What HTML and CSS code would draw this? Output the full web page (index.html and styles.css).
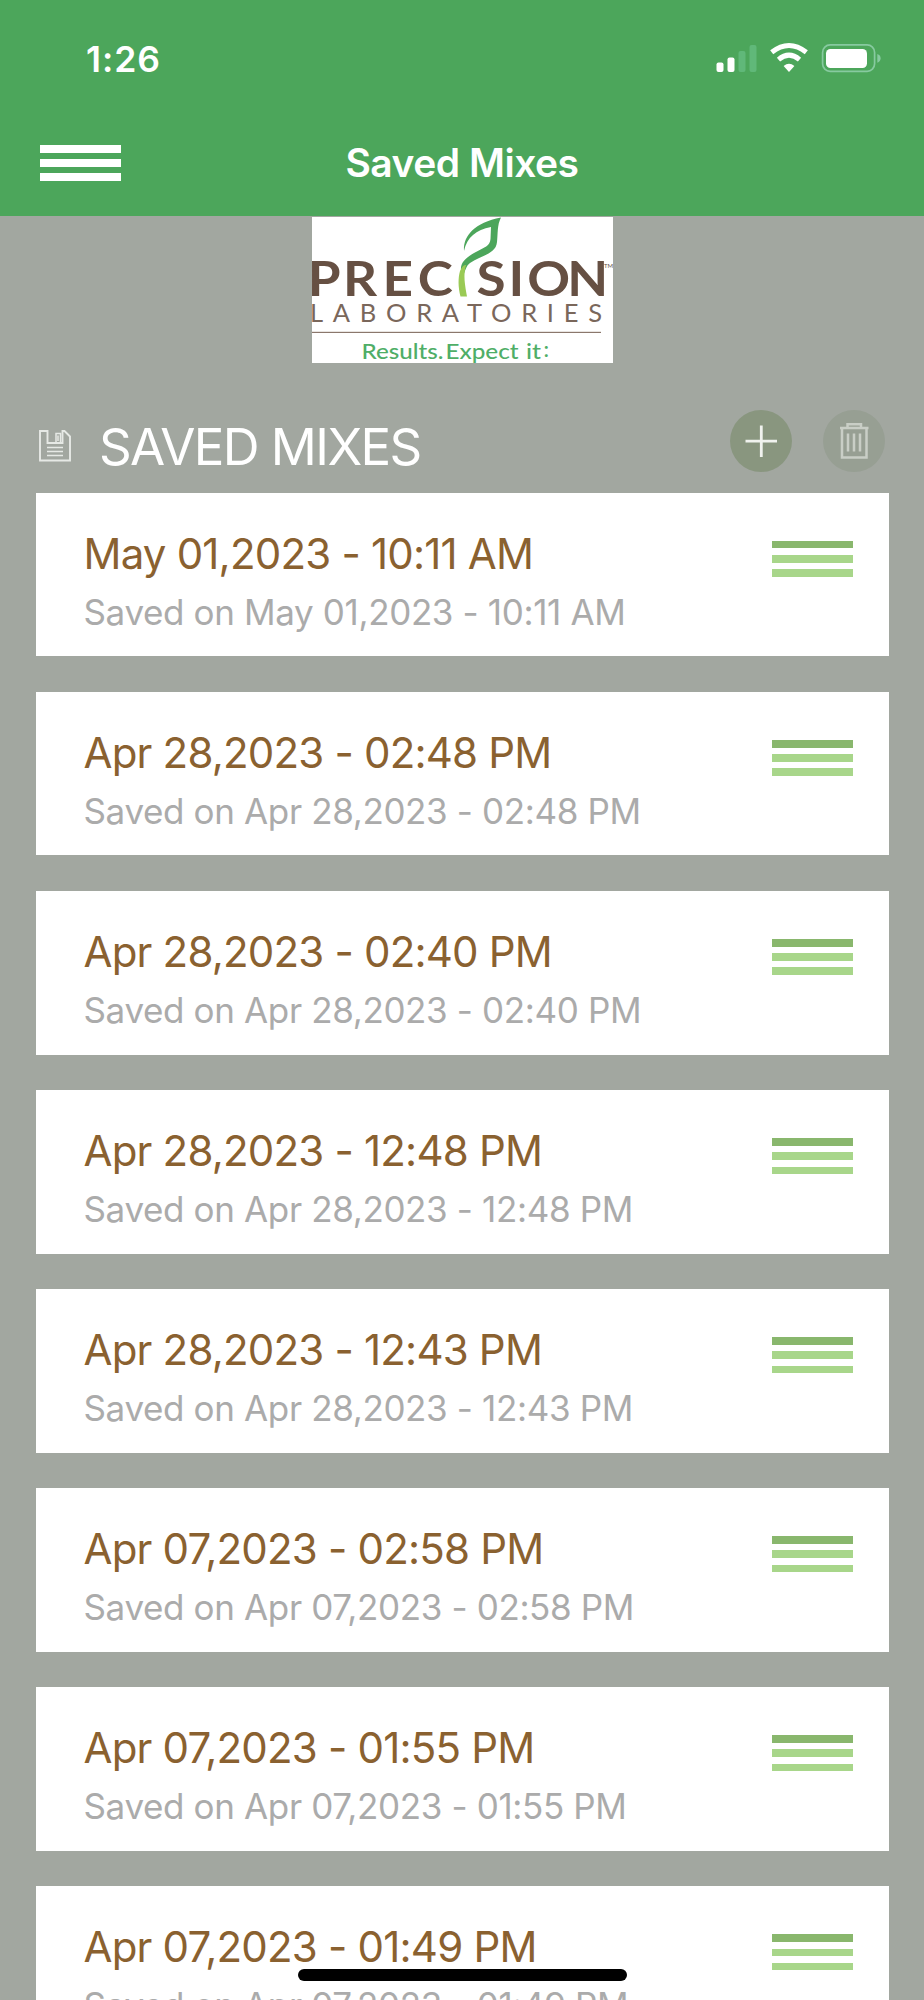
FILE: index.html
```html
<!DOCTYPE html>
<html lang="en">
<head>
  <meta charset="UTF-8" />
  <meta name="viewport" content="width=device-width, initial-scale=1.0"/>
  <title>Saved Mixes</title>
  <link rel="stylesheet" href="styles.css">
</head>
<body>

  <div class="header">
    <div class="status-bar">
      <div class="time">1:26</div>
      <svg class="status-icons" width="166" height="32" viewBox="0 0 166 32">
        <!-- signal -->
        <rect x="0.5" y="20.5" width="7" height="9.5" rx="2" fill="#fff"/>
        <rect x="11.5" y="15.5" width="7" height="14.5" rx="2" fill="#fff"/>
        <rect x="22.5" y="9" width="7" height="21" rx="2" fill="#60b879"/>
        <rect x="33.5" y="3" width="7" height="27" rx="2" fill="#60b879"/>
        <!-- wifi -->
        <path d="M55.7 10.2 Q73 -3.3 90.3 10.2" fill="none" stroke="#fff" stroke-width="5"/>
        <path d="M62.5 17.6 Q73 8.8 83.5 17.6" fill="none" stroke="#fff" stroke-width="5"/>
        <path d="M67.6 24 Q73 19.6 78.4 24 L73 30 Z" fill="#fff"/>
        <!-- battery -->
        <rect x="106.6" y="2.9" width="52" height="26.4" rx="7.5" fill="none" stroke="#87caa0" stroke-width="1.7"/>
        <rect x="110" y="7" width="41" height="19" rx="4.5" fill="#fff"/>
        <path d="M161.3 12 Q164.6 13 164.6 16.3 Q164.6 19.6 161.3 20.8 Z" fill="#87caa0"/>
      </svg>
    </div>
    <div class="nav-bar">
      <div class="bars menu-button"><span></span><span></span><span></span></div>
      <h1>Saved Mixes</h1>
    </div>
  </div>

  <div class="main-content">
    <svg class="logo" width="301" height="146" viewBox="0 0 301 146">
      <rect width="301" height="146" fill="#fff"/>
      <g class="logo-name" transform="scale(1.13 1)">
        <text x="-3.8 27.5 62.5 93.5" y="79.5">PREC</text>
        <text x="145.5 174 190.5 226" y="79.5">SION</text>
      </g>
      <text class="logo-tm" x="292" y="51">TM</text>
      <!-- leaf and stem -->
      <path d="M152 34 C151 20 161 6 189 0.5 C185 8 186 17 185 25 C184 37 170 38 158 46 C154 49 153 54 151 60 C146 49 150 43 162 36 C173 30 178 29 178.5 22 L179 10 C164 13 155 20 152 34 Z" fill="#4ca65b"/>
      <path d="M148 54 Q151 47 154 48 C151 58 153 68 155 79.5 L148.5 79.5 C146 70 146 61 148 54 Z" fill="#9aca55"/>
      <text class="logo-sub" x="-2" y="104.5" textLength="292" lengthAdjust="spacing">LABORATORIES</text>
      <rect x="0" y="114.8" width="289" height="1.2" fill="#8b776c"/>
      <text class="logo-tag" y="141.5"><tspan x="49.5" textLength="82" lengthAdjust="spacingAndGlyphs">Results.</tspan><tspan x="133.5" textLength="73" lengthAdjust="spacingAndGlyphs">Expect</tspan> <tspan x="214" textLength="15" lengthAdjust="spacingAndGlyphs">it</tspan><tspan x="231.5" dy="-1.5">:</tspan></text>
    </svg>

    <div class="section-header">
      <svg class="save-icon" width="32" height="32" viewBox="0 0 32 32" fill="none" stroke="#e6e9e5" stroke-width="1.9">
        <path d="M1 1 H8.5 V13 H23.5 V1 H25.5 L31 6.5 V30.5 H1 Z"/>
        <path d="M17 13 V3.5 H21.5 V13 M19 5.5 V11" stroke-width="1.5"/>
        <path d="M8 17.5 H24 M8 21.5 H24 M8 25.5 H24" stroke-width="1.6"/>
      </svg>
      <h2>SAVED MIXES</h2>
      <div class="actions">
        <div class="round-button add">
          <svg width="62" height="62" viewBox="0 0 62 62" fill="none" stroke="#f0f2ee" stroke-width="2.8">
            <path d="M15.5 31.2 H47 M31.3 15.5 V47"/>
          </svg>
        </div>
        <div class="round-button delete">
          <svg width="62" height="62" viewBox="0 0 62 62" fill="none" stroke="#c9cec6" stroke-width="2.5">
            <path d="M17 18 H45.5 M24.5 17 V14.3 H38 V17"/>
            <path d="M19 19 V47.5 H43.5 V19"/>
            <path d="M25 23.5 V41.5 M31 23.5 V41.5 M37 23.5 V41.5"/>
          </svg>
        </div>
      </div>
    </div>

    <div class="mix-list">
      <div class="mix-box">
        <div class="mix-info">
          <div class="mix-name">May 01,2023 - 10:11 AM</div>
          <div class="mix-date">Saved on May 01,2023 - 10:11 AM</div>
        </div>
        <div class="bars handle"><span></span><span></span><span></span></div>
      </div>
      <div class="mix-box">
        <div class="mix-info">
          <div class="mix-name">Apr 28,2023 - 02:48 PM</div>
          <div class="mix-date">Saved on Apr 28,2023 - 02:48 PM</div>
        </div>
        <div class="bars handle"><span></span><span></span><span></span></div>
      </div>
      <div class="mix-box">
        <div class="mix-info">
          <div class="mix-name">Apr 28,2023 - 02:40 PM</div>
          <div class="mix-date">Saved on Apr 28,2023 - 02:40 PM</div>
        </div>
        <div class="bars handle"><span></span><span></span><span></span></div>
      </div>
      <div class="mix-box">
        <div class="mix-info">
          <div class="mix-name">Apr 28,2023 - 12:48 PM</div>
          <div class="mix-date">Saved on Apr 28,2023 - 12:48 PM</div>
        </div>
        <div class="bars handle"><span></span><span></span><span></span></div>
      </div>
      <div class="mix-box">
        <div class="mix-info">
          <div class="mix-name">Apr 28,2023 - 12:43 PM</div>
          <div class="mix-date">Saved on Apr 28,2023 - 12:43 PM</div>
        </div>
        <div class="bars handle"><span></span><span></span><span></span></div>
      </div>
      <div class="mix-box">
        <div class="mix-info">
          <div class="mix-name">Apr 07,2023 - 02:58 PM</div>
          <div class="mix-date">Saved on Apr 07,2023 - 02:58 PM</div>
        </div>
        <div class="bars handle"><span></span><span></span><span></span></div>
      </div>
      <div class="mix-box">
        <div class="mix-info">
          <div class="mix-name">Apr 07,2023 - 01:55 PM</div>
          <div class="mix-date">Saved on Apr 07,2023 - 01:55 PM</div>
        </div>
        <div class="bars handle"><span></span><span></span><span></span></div>
      </div>
      <div class="mix-box">
        <div class="mix-info">
          <div class="mix-name">Apr 07,2023 - 01:49 PM</div>
          <div class="mix-date">Saved on Apr 07,2023 - 01:49 PM</div>
        </div>
        <div class="bars handle"><span></span><span></span><span></span></div>
      </div>
    </div>
  </div>

  <div class="home-indicator"></div>

</body>
</html>
```
FILE: styles.css
```css
* {
  box-sizing: border-box;
}

body {
  margin: 0;
  height: 2000px;
  overflow: hidden;
  position: relative;
  font-family: Inter, Roboto, sans-serif;
  background-color: #a2a7a0;
}

.header {
  height: 215.5px;
  background-color: #4ca65b;
  color: white;
}

.status-bar {
  display: flex;
  justify-content: space-between;
  height: 118px;
  padding: 37px 42px 0 86px;
}

.time {
  font-size: 35.5px;
  font-weight: 600;
  line-height: 46px;
  letter-spacing: 0.9px;
}

.status-icons {
  margin-top: 5px;
}

.nav-bar {
  display: grid;
  grid-template-columns: 81px 1fr 81px;
  align-items: center;
  padding: 0 40px;
  height: 90px;
}

.nav-bar h1 {
  margin: 0;
  text-align: center;
  font-size: 39px;
  font-weight: 600;
  line-height: 48px;
  letter-spacing: -0.5px;
}

.bars {
  display: flex;
  flex-direction: column;
  gap: 6.7px;
  width: 81px;
}

.bars span {
  height: 7.5px;
  background-color: white;
}

.logo {
  display: block;
  margin: 1.5px auto 0;
}

.logo-name {
  font-family: Lato, sans-serif;
  font-size: 47px;
  font-weight: 700;
  fill: #665043;
}

.logo-sub {
  font-family: Lato, sans-serif;
  font-size: 25.5px;
  fill: #7a675b;
}

.logo-tag {
  font-family: Lato, sans-serif;
  font-size: 22px;
  font-weight: 500;
  fill: #4fae67;
}

.logo-tm {
  font-family: Lato, sans-serif;
  font-size: 6px;
  fill: #665043;
}

.section-header {
  display: flex;
  align-items: center;
  height: 129.7px;
  padding: 26px 39px 0 38.5px;
}

.save-icon {
  margin-top: 11px;
}

.section-header h2 {
  margin: 12px 0 0 28.5px;
  color: white;
  font-size: 51px;
  font-weight: 400;
  line-height: 60px;
  letter-spacing: -1.6px;
}

.actions {
  display: flex;
  gap: 31px;
  margin-left: auto;
}

.round-button {
  width: 62px;
  height: 62px;
  border-radius: 50%;
}

.add {
  background-color: #89967f;
}

.delete {
  background-color: #979f93;
}

.mix-list {
  display: flex;
  flex-direction: column;
  gap: 35.3px;
  padding: 0 35.5px;
}

.mix-box {
  display: flex;
  justify-content: space-between;
  flex-shrink: 0;
  height: 163.75px;
  padding: 36px 35.5px 0 48px;
  background-color: white;
}

.mix-name {
  color: #8a6130;
  font-size: 42px;
  line-height: 50px;
  letter-spacing: -0.8px;
  white-space: nowrap;
}

.mix-date {
  margin-top: 11px;
  color: #ababab;
  font-size: 35px;
  line-height: 44px;
  letter-spacing: -0.36px;
  white-space: nowrap;
}

.handle {
  margin-top: 12.3px;
}

.handle span {
  background-color: #a8d68a;
}

.handle span:first-child {
  background-color: #89b76d;
}

.home-indicator {
  position: absolute;
  left: 298px;
  top: 1969px;
  width: 329px;
  height: 12px;
  border-radius: 6px;
  background-color: black;
}
```
